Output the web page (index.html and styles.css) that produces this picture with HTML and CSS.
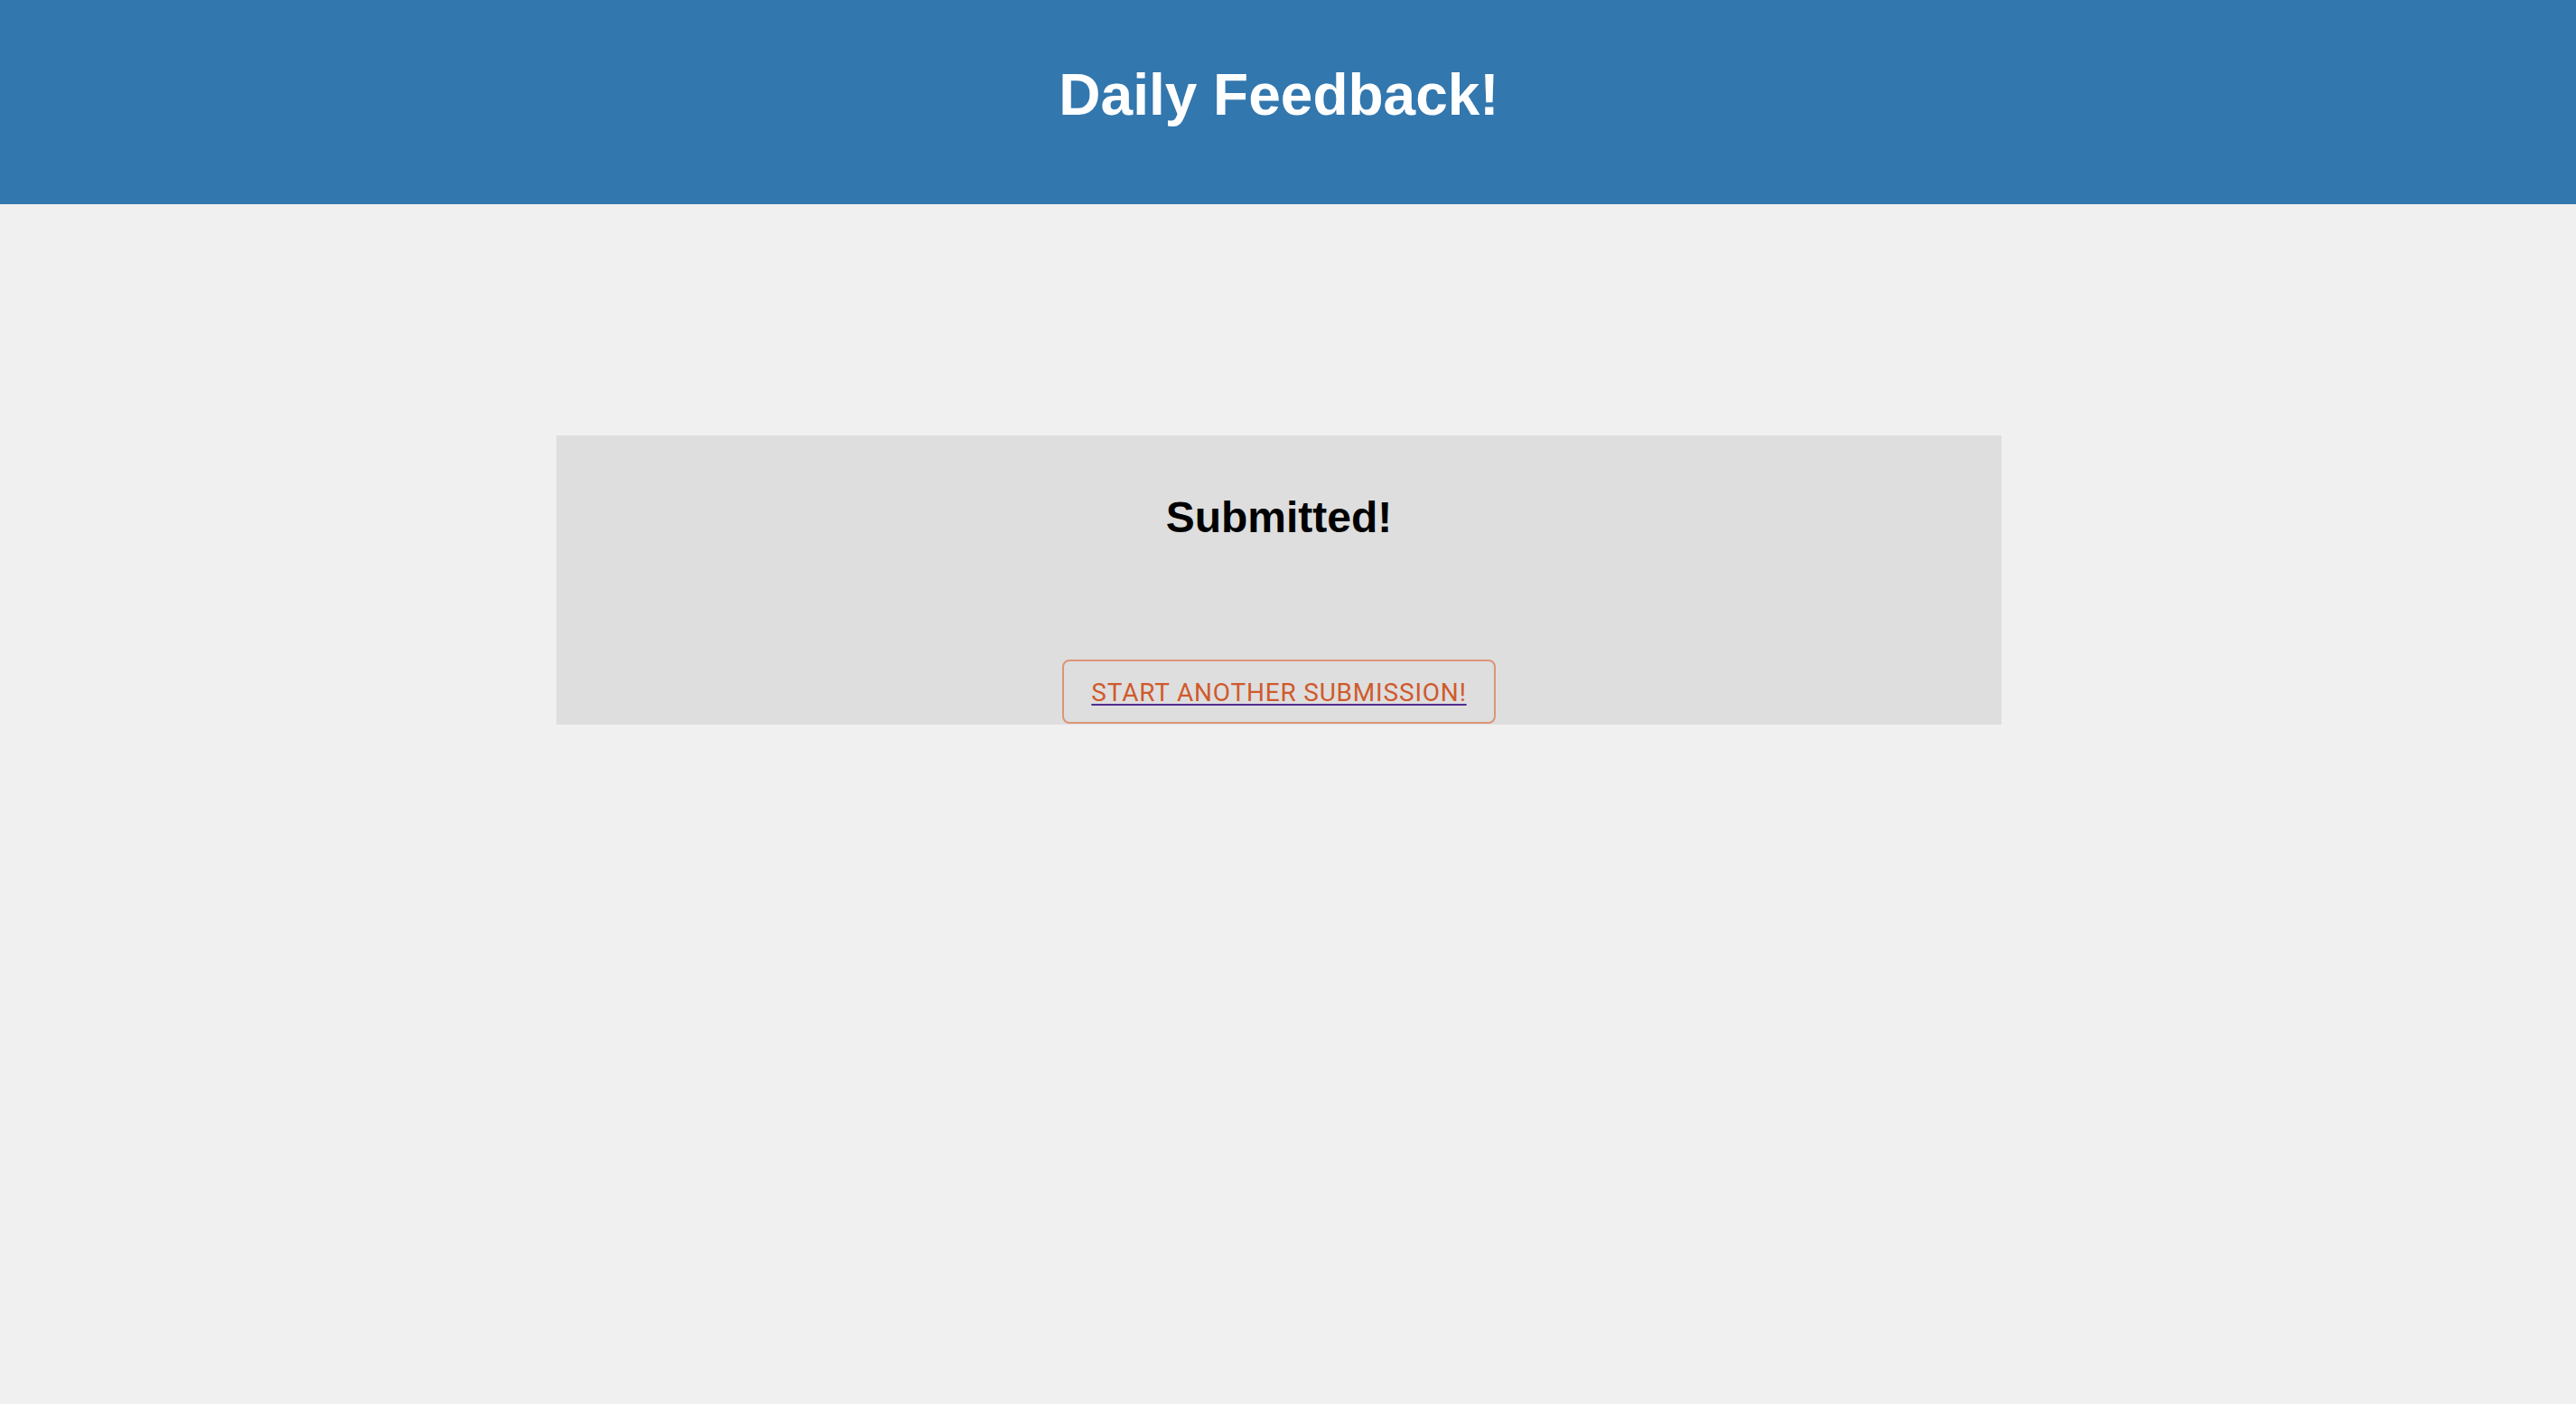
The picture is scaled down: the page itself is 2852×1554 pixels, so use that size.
FILE: index.html
```html
<!DOCTYPE html>
<html lang="en">
<head>
<meta charset="utf-8">
<title>Daily Feedback!</title>
<link rel="stylesheet" href="styles.css">
</head>
<body>
  <header class="site-header">
    <h1 class="site-title">Daily Feedback!</h1>
  </header>
  <main class="main">
    <section class="card">
      <h2 class="card-title">Submitted!</h2>
      <a class="again-btn" href="#">START ANOTHER SUBMISSION!</a>
    </section>
  </main>
</body>
</html>
```
FILE: styles.css
```css
html, body {
  margin: 0;
  padding: 0;
}
body {
  background: #f0f0f0;
  font-family: "Liberation Sans", Arial, Helvetica, sans-serif;
}
.site-header {
  background: #3277ae;
  height: 226px;
  box-sizing: border-box;
  padding: 68px 20px 0 0;
}
.site-title {
  margin: 0;
  text-align: center;
  color: #ffffff;
  font-size: 64px;
  line-height: 74px;
  font-weight: 700;
}
.main {
  display: flex;
  justify-content: center;
  padding: 256px 20px 0 0;
}
.card {
  width: 1600px;
  background: #dedede;
  box-sizing: border-box;
  padding: 63px 0 1px;
  display: flex;
  flex-direction: column;
  align-items: center;
}
.card-title {
  margin: 0 0 130px;
  font-size: 48px;
  line-height: 55px;
  font-weight: 700;
  color: #000;
}
.again-btn {
  display: inline-block;
  border: 2px solid #dc9579;
  border-radius: 8px;
  padding: 18px 30px 16px;
  font-family: Roboto, "Noto Sans", sans-serif;
  font-size: 28px;
  line-height: 33px;
  letter-spacing: 0.8px;
  color: #d05a2c;
  text-decoration: underline;
  text-decoration-color: #522c8e;
  text-decoration-thickness: 2px;
  text-underline-offset: 3px;
}
```
